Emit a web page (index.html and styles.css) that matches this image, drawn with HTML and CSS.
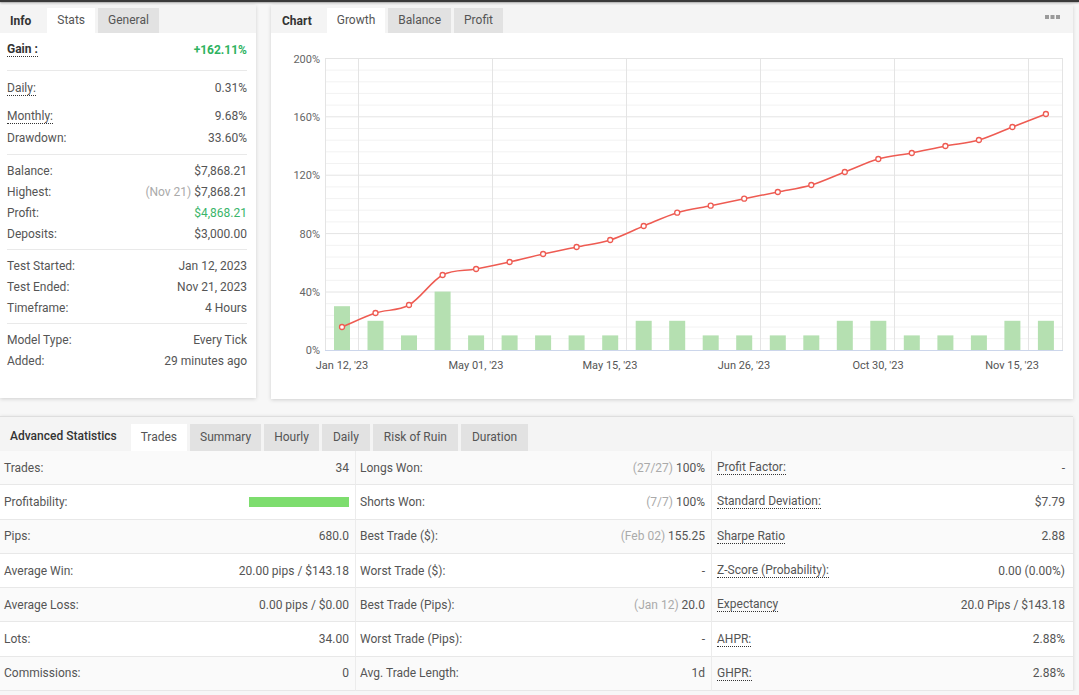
FILE: index.html
```html
<!DOCTYPE html>
<html>
<head>
<meta charset="utf-8">
<link rel="stylesheet" href="styles.css">
</head>
<body>
<div class="topline"></div>
<div class="top">
  <div class="panel info">
    <div class="tabbar">
      <span class="tab-label l-info">Info</span>
      <span class="tab active">Stats</span>
      <span class="tab">General</span>
    </div>
    <div class="group g-gain">
      <div class="row"><span class="dotted gain-lbl">Gain :</span><span class="gain">+162.11%</span></div>
    </div>
    <div class="group g-rates">
      <div class="row"><span class="dotted">Daily:</span><span>0.31%</span></div>
      <div class="row r-monthly"><span class="dotted">Monthly:</span><span>9.68%</span></div>
      <div class="row"><span>Drawdown:</span><span>33.60%</span></div>
    </div>
    <div class="group">
      <div class="row"><span>Balance:</span><span>$7,868.21</span></div>
      <div class="row"><span>Highest:</span><span><span class="muted">(Nov 21)</span> $7,868.21</span></div>
      <div class="row"><span>Profit:</span><span class="profit">$4,868.21</span></div>
      <div class="row"><span>Deposits:</span><span>$3,000.00</span></div>
    </div>
    <div class="group">
      <div class="row"><span>Test Started:</span><span>Jan 12, 2023</span></div>
      <div class="row"><span>Test Ended:</span><span>Nov 21, 2023</span></div>
      <div class="row"><span>Timeframe:</span><span>4 Hours</span></div>
    </div>
    <div class="group last">
      <div class="row"><span>Model Type:</span><span>Every Tick</span></div>
      <div class="row"><span>Added:</span><span>29 minutes ago</span></div>
    </div>
  </div>

  <div class="panel chart">
    <div class="tabbar">
      <span class="tab-label l-chart">Chart</span>
      <span class="tab active">Growth</span>
      <span class="tab">Balance</span>
      <span class="tab">Profit</span>
      <svg class="menu" width="16" height="5" viewBox="0 0 16 5"><rect x="0" y="0" width="4" height="4" fill="#9a9a9a"/><rect x="5.5" y="0" width="4" height="4" fill="#9a9a9a"/><rect x="11" y="0" width="4" height="4" fill="#9a9a9a"/></svg>
    </div>
    <svg class="plot" width="802" height="366" viewBox="271 33 802 366">
      <g stroke="#f2f2f2" stroke-width="1">
        <line x1="325" x2="1063" y1="70.1" y2="70.1"/><line x1="325" x2="1063" y1="81.8" y2="81.8"/><line x1="325" x2="1063" y1="93.4" y2="93.4"/><line x1="325" x2="1063" y1="105.1" y2="105.1"/>
        <line x1="325" x2="1063" y1="128.5" y2="128.5"/><line x1="325" x2="1063" y1="140.2" y2="140.2"/><line x1="325" x2="1063" y1="151.8" y2="151.8"/><line x1="325" x2="1063" y1="163.5" y2="163.5"/>
        <line x1="325" x2="1063" y1="186.9" y2="186.9"/><line x1="325" x2="1063" y1="198.6" y2="198.6"/><line x1="325" x2="1063" y1="210.2" y2="210.2"/><line x1="325" x2="1063" y1="221.9" y2="221.9"/>
        <line x1="325" x2="1063" y1="245.3" y2="245.3"/><line x1="325" x2="1063" y1="257" y2="257"/><line x1="325" x2="1063" y1="268.6" y2="268.6"/><line x1="325" x2="1063" y1="280.3" y2="280.3"/>
        <line x1="325" x2="1063" y1="303.7" y2="303.7"/><line x1="325" x2="1063" y1="315.4" y2="315.4"/><line x1="325" x2="1063" y1="327" y2="327"/><line x1="325" x2="1063" y1="338.7" y2="338.7"/>
      </g>
      <g stroke="#e4e4e4" stroke-width="1">
        <line x1="325" x2="1063" y1="58.5" y2="58.5"/><line x1="325" x2="1063" y1="116.8" y2="116.8"/><line x1="325" x2="1063" y1="175.2" y2="175.2"/><line x1="325" x2="1063" y1="233.6" y2="233.6"/><line x1="325" x2="1063" y1="292" y2="292"/>
        <line x1="325.5" x2="325.5" y1="58.5" y2="350"/><line x1="1062.5" x2="1062.5" y1="58.5" y2="350"/>
        <line x1="358.5" x2="358.5" y1="58.5" y2="350"/><line x1="492.5" x2="492.5" y1="58.5" y2="350"/><line x1="626.5" x2="626.5" y1="58.5" y2="350"/><line x1="760.5" x2="760.5" y1="58.5" y2="350"/><line x1="894.5" x2="894.5" y1="58.5" y2="350"/><line x1="1028.5" x2="1028.5" y1="58.5" y2="350"/>
      </g>
      <g fill="#b5e0b1">
        <rect x="334" y="306.2" width="16" height="43.8"/>
        <rect x="367.5" y="320.8" width="16" height="29.2"/>
        <rect x="401" y="335.4" width="16" height="14.6"/>
        <rect x="434.6" y="291.6" width="16" height="58.4"/>
        <rect x="468.1" y="335.4" width="16" height="14.6"/>
        <rect x="501.6" y="335.4" width="16" height="14.6"/>
        <rect x="535.1" y="335.4" width="16" height="14.6"/>
        <rect x="568.6" y="335.4" width="16" height="14.6"/>
        <rect x="602.2" y="335.4" width="16" height="14.6"/>
        <rect x="635.7" y="320.8" width="16" height="29.2"/>
        <rect x="669.2" y="320.8" width="16" height="29.2"/>
        <rect x="702.7" y="335.4" width="16" height="14.6"/>
        <rect x="736.2" y="335.4" width="16" height="14.6"/>
        <rect x="769.8" y="335.4" width="16" height="14.6"/>
        <rect x="803.3" y="335.4" width="16" height="14.6"/>
        <rect x="836.8" y="320.8" width="16" height="29.2"/>
        <rect x="870.3" y="320.8" width="16" height="29.2"/>
        <rect x="903.8" y="335.4" width="16" height="14.6"/>
        <rect x="937.4" y="335.4" width="16" height="14.6"/>
        <rect x="970.9" y="335.4" width="16" height="14.6"/>
        <rect x="1004.4" y="320.8" width="16" height="29.2"/>
        <rect x="1037.9" y="320.8" width="16" height="29.2"/>
      </g>
      <line x1="325" x2="1063" y1="350.5" y2="350.5" stroke="#ccd6eb" stroke-width="1"/>
      <path fill="none" stroke="#ee5b52" stroke-width="1.5" d="M342 327 C353.2 322.3 364.3 316.7 375.5 313 C386.7 309.3 397.8 311.3 409 305 C420.2 298.7 431.4 281 442.6 275 C453.8 269 464.9 271.2 476.1 269 C487.3 266.8 498.4 264.5 509.6 262 C520.8 259.5 531.9 256.5 543.1 254 C554.3 251.5 565.4 249.3 576.6 247 C587.8 244.7 599 243.5 610.2 240 C621.4 236.5 632.5 230.6 643.7 226 C654.9 221.5 666 216.1 677.2 212.7 C688.4 209.3 699.5 208 710.7 205.7 C721.9 203.4 733 201 744.2 198.7 C755.4 196.4 766.6 194.3 777.8 192 C789 189.7 800.1 188.3 811.3 185 C822.5 181.7 833.6 176.3 844.8 172 C856 167.7 867.1 162.2 878.3 159 C889.5 155.8 900.6 155.2 911.8 153 C923 150.8 934.2 148.2 945.4 146 C956.6 143.8 967.7 143.2 978.9 140 C990.1 136.8 1001.2 131.3 1012.4 127 C1023.6 122.7 1034.7 118.3 1045.9 114"/>
      <g fill="#fff" stroke="#ee5b52" stroke-width="1.3">
        <circle cx="342" cy="327" r="2.5"/><circle cx="375.5" cy="313" r="2.5"/><circle cx="409" cy="305" r="2.5"/><circle cx="442.6" cy="275" r="2.5"/>
        <circle cx="476.1" cy="269" r="2.5"/><circle cx="509.6" cy="262" r="2.5"/><circle cx="543.1" cy="254" r="2.5"/><circle cx="576.6" cy="247" r="2.5"/>
        <circle cx="610.2" cy="240" r="2.5"/><circle cx="643.7" cy="226" r="2.5"/><circle cx="677.2" cy="212.7" r="2.5"/><circle cx="710.7" cy="205.7" r="2.5"/>
        <circle cx="744.2" cy="198.7" r="2.5"/><circle cx="777.8" cy="192" r="2.5"/><circle cx="811.3" cy="185" r="2.5"/><circle cx="844.8" cy="172" r="2.5"/>
        <circle cx="878.3" cy="159" r="2.5"/><circle cx="911.8" cy="153" r="2.5"/><circle cx="945.4" cy="146" r="2.5"/><circle cx="978.9" cy="140" r="2.5"/>
        <circle cx="1012.4" cy="127" r="2.5"/><circle cx="1045.9" cy="114" r="2.5"/>
      </g>
      <g class="ylab" text-anchor="end">
        <text x="320" y="63">200%</text><text x="320" y="121">160%</text><text x="320" y="179">120%</text><text x="320" y="238">80%</text><text x="320" y="296">40%</text><text x="320" y="354">0%</text>
      </g>
      <g class="xlab" text-anchor="middle">
        <text x="342" y="369">Jan 12, '23</text><text x="476" y="369">May 01, '23</text><text x="610" y="369">May 15, '23</text><text x="744" y="369">Jun 26, '23</text><text x="878" y="369">Oct 30, '23</text><text x="1012" y="369">Nov 15, '23</text>
      </g>
    </svg>
  </div>
</div>

<div class="panel adv">
  <div class="tabbar adv-bar">
    <span class="tab-label l-adv">Advanced Statistics</span>
    <span class="tab active">Trades</span>
    <span class="tab">Summary</span>
    <span class="tab">Hourly</span>
    <span class="tab">Daily</span>
    <span class="tab">Risk of Ruin</span>
    <span class="tab">Duration</span>
  </div>
  <div class="table">
    <div class="trow">
      <div class="cell"><span>Trades:</span><span>34</span></div>
      <div class="cell"><span>Longs Won:</span><span><span class="muted">(27/27)</span> 100%</span></div>
      <div class="cell c3"><span class="dotted">Profit Factor:</span><span>-</span></div>
    </div>
    <div class="trow">
      <div class="cell"><span>Profitability:</span><span class="pbar"></span></div>
      <div class="cell"><span>Shorts Won:</span><span><span class="muted">(7/7)</span> 100%</span></div>
      <div class="cell c3"><span class="dotted">Standard Deviation:</span><span>$7.79</span></div>
    </div>
    <div class="trow">
      <div class="cell"><span>Pips:</span><span>680.0</span></div>
      <div class="cell"><span>Best Trade ($):</span><span><span class="muted">(Feb 02)</span> 155.25</span></div>
      <div class="cell c3"><span class="dotted">Sharpe Ratio</span><span>2.88</span></div>
    </div>
    <div class="trow">
      <div class="cell"><span>Average Win:</span><span>20.00 pips / $143.18</span></div>
      <div class="cell"><span>Worst Trade ($):</span><span>-</span></div>
      <div class="cell c3"><span class="dotted">Z-Score (Probability):</span><span>0.00 (0.00%)</span></div>
    </div>
    <div class="trow">
      <div class="cell"><span>Average Loss:</span><span>0.00 pips / $0.00</span></div>
      <div class="cell"><span>Best Trade (Pips):</span><span><span class="muted">(Jan 12)</span> 20.0</span></div>
      <div class="cell c3"><span class="dotted">Expectancy</span><span>20.0 Pips / $143.18</span></div>
    </div>
    <div class="trow">
      <div class="cell"><span>Lots:</span><span>34.00</span></div>
      <div class="cell"><span>Worst Trade (Pips):</span><span>-</span></div>
      <div class="cell c3"><span class="dotted">AHPR:</span><span>2.88%</span></div>
    </div>
    <div class="trow">
      <div class="cell"><span>Commissions:</span><span>0</span></div>
      <div class="cell"><span>Avg. Trade Length:</span><span>1d</span></div>
      <div class="cell c3"><span class="dotted">GHPR:</span><span>2.88%</span></div>
    </div>
  </div>
</div>
</body>
</html>
```

FILE: styles.css
```css
* { box-sizing: border-box; }

body {
  margin: 0;
  background: #f7f7f7;
  font-family: Roboto, "Liberation Sans", Arial, sans-serif;
  font-size: 12px;
  color: #555;
}

.topline {
  height: 2px;
  background: #3a3a3a;
  box-shadow: 0 1px 2px rgba(0, 0, 0, 0.35);
}

.top {
  display: flex;
  gap: 15px;
  margin-top: 3px;
  align-items: flex-start;
}

.panel {
  background: #fff;
  box-shadow: 0 1px 4px rgba(0, 0, 0, 0.16);
}

.info {
  width: 256px;
  height: 393px;
}

.chart {
  width: 802px;
  height: 394px;
}

.tabbar {
  display: flex;
  align-items: flex-end;
  height: 28px;
  background: #f4f4f4;
}

.tab-label {
  align-self: stretch;
  display: flex;
  align-items: center;
  padding-top: 3px;
  font-weight: 700;
  color: #333;
}

.l-info { padding-left: 10px; margin-right: 16px; }
.l-chart { padding-left: 11px; margin-right: 15px; }
.l-adv { padding-left: 10px; margin-right: 14px; font-weight: 500; }

.tab {
  height: 25px;
  line-height: 25px;
  padding: 0 10px;
  background: #e2e2e2;
  margin-right: 3px;
  color: #555;
}

.tab.active {
  background: #fff;
}

.menu {
  margin-left: auto;
  margin-right: 12px;
  align-self: flex-start;
  margin-top: 10px;
}

.plot {
  display: block;
}

.ylab text {
  font-family: Roboto, "Liberation Sans", sans-serif;
  font-size: 11px;
  fill: #666;
}

.xlab text {
  font-family: Roboto, "Liberation Sans", sans-serif;
  font-size: 11px;
  fill: #555;
}

/* left stats */
.group {
  margin: 0 9px 0 7px;
  padding: 5px 0 5px;
  border-bottom: 1px solid #e9e9e9;
}

.group.last {
  border-bottom: none;
}

.g-gain {
  padding: 6px 0 10px;
}

.g-rates {
  padding: 6px 0 5px;
}

.row {
  display: flex;
  justify-content: space-between;
  align-items: center;
  height: 21px;
}

.g-rates .row {
  height: 22px;
}

.g-rates .r-monthly {
  margin-top: 6px;
}

.dotted {
  border-bottom: 1px dotted #333;
  line-height: 14px;
}

.gain-lbl {
  font-weight: 700;
  color: #333;
}

.gain {
  font-weight: 700;
  color: #2eb35f;
}

.profit {
  color: #3ab56a;
}

.muted {
  color: #aaa;
}

/* advanced */
.adv {
  width: 1073px;
  margin-top: 17px;
}

.adv-bar {
  height: 35px;
  border-top: 1px solid #dedede;
}

.adv-bar .tab {
  height: 27px;
  line-height: 27px;
}

.adv-bar .tab:nth-child(n+5) {
  padding: 0 11px;
}

.trow {
  display: flex;
  height: 34.3px;
}

.trow:nth-child(odd) {
  background: #fafafa;
}

.cell {
  width: 356px;
  display: flex;
  justify-content: space-between;
  align-items: center;
  padding: 0 6px 0 4px;
  border-bottom: 1px solid #e8e8e8;
  border-right: 1px solid #ececec;
}

.cell.c3 {
  flex: 1;
  border-right: none;
  padding: 0 8px 0 5px;
}

.pbar {
  width: 100px;
  height: 10px;
  background: #7ddd6e;
}
```
